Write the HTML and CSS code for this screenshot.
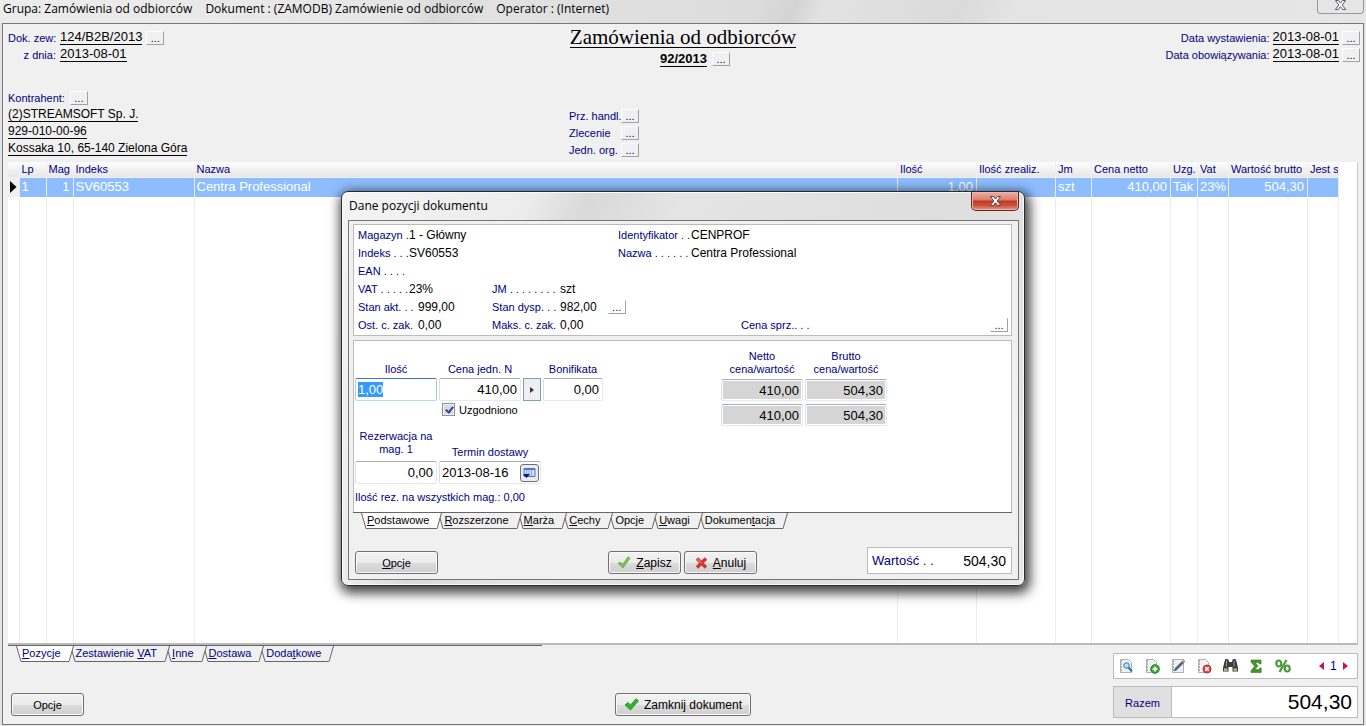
FILE: index.html
```html
<!DOCTYPE html>
<html lang="pl">
<head>
<meta charset="utf-8">
<title>Zamówienia od odbiorców</title>
<link rel="stylesheet" href="styles.css">
</head>
<body>
<header class="titlebar">
  <span>Grupa: Zamówienia od odbiorców</span>
  <span>Dokument : (ZAMODB) Zamówienie od odbiorców</span>
  <span>Operator : (Internet)</span>
  <button class="win-close" aria-label="Zamknij okno"><svg width="13" height="11" viewBox="0 0 13 11"><path d="M1.5 .5h3l2 2.6 2-2.6h3L8.200 5l3.500 4.500h-3l-2.200-2.800L4.300 9.500h-3L4.800 5z" fill="#fff" stroke="#555b6b"/></svg></button>
</header>
<main class="panel">
  <section class="doc-head">
    <div class="head-left">
      <div class="line"><span class="lbl w-lbl">Dok. zew:</span><span class="val big">124/B2B/2013</span><button class="dots">...</button></div>
      <div class="line"><span class="lbl w-lbl">z dnia:</span><span class="val big">2013-08-01</span></div>
      <div class="line customer"><span class="lbl">Kontrahent:</span><button class="dots">...</button></div>
      <div class="line"><span class="val">(2)STREAMSOFT Sp. J.</span></div>
      <div class="line"><span class="val">929-010-00-96</span></div>
      <div class="line"><span class="val">Kossaka 10, 65-140 Zielona Góra</span></div>
    </div>
    <div class="head-mid">
      <h1 class="doc-title">Zamówienia od odbiorców</h1>
      <div class="doc-no"><span>92/2013</span><button class="dots">...</button></div>
      <div class="mid-list">
        <div class="line"><span class="lbl">Prz. handl.</span><button class="dots">...</button></div>
        <div class="line"><span class="lbl">Zlecenie</span><button class="dots">...</button></div>
        <div class="line"><span class="lbl">Jedn. org.</span><button class="dots">...</button></div>
      </div>
    </div>
    <div class="head-right">
      <div class="line"><span class="lbl">Data wystawienia:</span><span class="val big">2013-08-01</span><button class="dots">...</button></div>
      <div class="line"><span class="lbl">Data obowiązywania:</span><span class="val big">2013-08-01</span><button class="dots">...</button></div>
    </div>
  </section>

  <div class="grid-box">
    <table class="items">
      <colgroup><col class="c11"><col class="c27"><col class="c27"><col class="c121"><col><col class="c79"><col class="c79"><col class="c36"><col class="c79"><col class="c27"><col class="c31"><col class="c79"><col class="c31"></colgroup>
      <thead><tr><th></th><th>Lp</th><th>Mag</th><th>Indeks</th><th>Nazwa</th><th>Ilość</th><th>Ilość zrealiz.</th><th>Jm</th><th>Cena netto</th><th>Uzg.</th><th>Vat</th><th>Wartość brutto</th><th>Jest s</th></tr></thead>
      <tbody>
        <tr class="selected"><td class="mark"><svg width="7" height="12" viewBox="0 0 7 12"><path d="M0 0l6.500 6L0 12z"/></svg></td><td>1</td><td class="num">1</td><td>SV60553</td><td>Centra Professional</td><td class="num">1,00</td><td></td><td>szt</td><td class="num">410,00</td><td>Tak</td><td>23%</td><td class="num">504,30</td><td></td></tr>
        <tr class="filler"><td></td><td></td><td></td><td></td><td></td><td></td><td></td><td></td><td></td><td></td><td></td><td></td><td></td></tr>
      </tbody>
    </table>
  </div>

  <footer class="doc-foot">
    <nav class="tabs main-tabs">
      <svg class="edge" width="6" height="16"><path class="on" d="M0 0L5 15.500H6V0z"/><path d="M.5 0L5 15.500H6"/></svg>
      <button class="tab active"><u>P</u>ozycje</button>
      <svg class="edge" width="7" height="16"><path class="on" d="M0 0V15.500L4 0z"/><path d="M0 15.500L4.500 0M3 5L6 15.500H7"/></svg>
      <button class="tab">Zestawienie <u>V</u>AT</button>
      <svg class="edge" width="7" height="16"><path d="M0 15.500L4.500 0M3 5L6 15.500H7"/></svg>
      <button class="tab"><u>I</u>nne</button>
      <svg class="edge" width="7" height="16"><path d="M0 15.500L4.500 0M3 5L6 15.500H7"/></svg>
      <button class="tab"><u>D</u>ostawa</button>
      <svg class="edge" width="7" height="16"><path d="M0 15.500L4.500 0M3 5L6 15.500H7"/></svg>
      <button class="tab">Doda<u>t</u>kowe</button>
      <svg class="edge" width="7" height="16"><path d="M0 15.500L4.500 0"/></svg>
    </nav>
    <button class="btn b-options">Opcje</button>
    <button class="btn b-close"><svg width="15" height="13" viewBox="0 0 15 13"><path d="M1 7l3-2.500 2.500 2.500L12 .8l2.500 2L6.500 12z" fill="#2fb52a" stroke="#1d8f1a" stroke-width=".8"/></svg><span>Zamknij dokument</span></button>
    <div class="foot-right">
      <div class="toolbar">
        <button class="tool" aria-label="Podgląd"><svg width="15" height="16" viewBox="0 0 15 16"><path d="M1.500 1.500h8l3 3v10h-11z" fill="#f1f1f1" stroke="#b0b0b0"/><path d="M2 3h1M2 6h1M2 9h1M2 12h1" stroke="#666"/><circle cx="7.500" cy="7.500" r="2.700" fill="#b9e2f8" stroke="#4e9bd0" stroke-width="1.300"/><path d="M9.500 9.500l3.500 4" stroke="#2f6fb0" stroke-width="2"/></svg></button>
        <button class="tool" aria-label="Dodaj"><svg width="15" height="16" viewBox="0 0 15 16"><path d="M1.500 1.500h7l3 3v10h-10z" fill="#f1f1f1" stroke="#b0b0b0"/><path d="M2 3h1M2 6h1M2 9h1M2 12h1" stroke="#666"/><circle cx="10" cy="11" r="4.300" fill="#3fa63c" stroke="#25802a"/><path d="M10 8.500v5M7.500 11h5" stroke="#fff" stroke-width="1.600"/></svg></button>
        <button class="tool" aria-label="Edytuj"><svg width="15" height="16" viewBox="0 0 15 16"><path d="M1.500 1.500h11v13h-11z" fill="#f1f1f1" stroke="#b0b0b0"/><path d="M2 3h1M2 6h1M2 9h1M2 12h1" stroke="#666"/><path d="M4 12l8-8" stroke="#41688f" stroke-width="2.500"/><path d="M11.500 4.500l2-2" stroke="#c98a4a" stroke-width="2.500"/><path d="M3 13.200l1.800-.8-1-1z" fill="#333"/></svg></button>
        <button class="tool" aria-label="Usuń"><svg width="15" height="16" viewBox="0 0 15 16"><path d="M1.500 1.500h7l3 3v10h-10z" fill="#f1f1f1" stroke="#b0b0b0"/><path d="M2 3h1M2 6h1M2 9h1M2 12h1" stroke="#666"/><circle cx="10" cy="11" r="4" fill="#e04a45" stroke="#b92c2c"/><path d="M8.300 9.300l3.400 3.400M11.700 9.300l-3.400 3.400" stroke="#fff" stroke-width="1.500"/></svg></button>
        <button class="tool" aria-label="Szukaj"><svg width="15" height="16" viewBox="0 0 15 16"><path d="M1.500 3.500L2.500 1h2.300l1.200 2v1h3V3l1.200-2h2.300l1 2.500L15 10v3.500H9.500V9h-4v4.500H0V10z" fill="#3d3d3d"/><path d="M3.500 2.500v6M11 2.500v6" stroke="#999"/><path d="M1 10.500h3.500v2.200H1zM10.500 10.500H14v2.200h-3.500z" fill="#d2bd83"/></svg></button>
        <button class="tool" aria-label="Suma"><svg width="15" height="16" viewBox="0 0 15 16"><path d="M2 2h10v4h-1.500L9.500 4.500H6.200L9 8l-3.300 3.600h4L11 10h1.200v4.500H2v-1.800L5.600 8.300 2 4z" fill="#45952b" stroke="#2f7720" stroke-width=".6"/></svg></button>
        <button class="tool" aria-label="Procent"><svg width="16" height="16" viewBox="0 0 16 16"><g fill="none" stroke="#4a9a35" stroke-width="2.200"><ellipse cx="3.800" cy="5.500" rx="2.500" ry="3"/><ellipse cx="12.200" cy="10.500" rx="2.500" ry="3"/><path d="M11.500 2L4.500 14"/></g></svg></button>
        <div class="pager"><button aria-label="Poprzednia"><svg width="5" height="8" viewBox="0 0 5 8"><path d="M5 0v8L0 4z" fill="#cc0f57"/></svg></button><span>1</span><button aria-label="Następna"><svg width="5" height="8" viewBox="0 0 5 8"><path d="M0 0v8l5-4z" fill="#cc0f57"/></svg></button></div>
      </div>
      <div class="total"><span class="total-lbl">Razem</span><span class="total-val">504,30</span></div>
    </div>
  </footer>
</main>

<div class="overlay">
  <section class="dialog" role="dialog" aria-labelledby="dlg-title">
    <header class="dlg-bar"><h2 id="dlg-title">Dane pozycji dokumentu</h2>
      <button class="dlg-close" aria-label="Zamknij"><svg width="13" height="11" viewBox="0 0 13 11"><path d="M1.500 .5h3l2 2.600 2-2.600h3L8.200 5l3.500 4.500h-3l-2.200-2.800L4.300 9.500h-3L4.800 5z" fill="#fff" stroke="#5b4650"/></svg></button></header>
    <div class="dlg-body">
      <div class="info">
        <div class="cell a r1"><span class="lbl">Magazyn .</span><span>1 - Główny</span></div>
        <div class="cell c r1"><span class="lbl">Identyfikator . .</span><span>CENPROF</span></div>
        <div class="cell a r2"><span class="lbl">Indeks . . .</span><span>SV60553</span></div>
        <div class="cell c r2"><span class="lbl">Nazwa . . . . . .</span><span>Centra Professional</span></div>
        <div class="cell a r3"><span class="lbl">EAN . . . .</span></div>
        <div class="cell a r4"><span class="lbl">VAT . . . . .</span><span>23%</span></div>
        <div class="cell b r4"><span class="lbl">JM . . . . . . . .</span><span>szt</span></div>
        <div class="cell a wide r5"><span class="lbl">Stan akt. . .</span><span>999,00</span></div>
        <div class="cell b r5"><span class="lbl">Stan dysp. . .</span><span>982,00</span><button class="dots">...</button></div>
        <div class="cell a wide r6"><span class="lbl">Ost. c. zak.</span><span>0,00</span></div>
        <div class="cell b r6"><span class="lbl">Maks. c. zak.</span><span>0,00</span></div>
        <div class="cell d r6"><span class="lbl">Cena sprz.. . .</span><button class="dots">...</button></div>
      </div>
      <div class="edit">
        <form class="fields">
          <label class="f-lbl" for="ilosc">Ilość</label>
          <label class="f-lbl" for="cena">Cena jedn. N</label>
          <label class="f-lbl l-bon" for="bon">Bonifikata</label>
          <input class="inp focus" id="ilosc" value="1,00">
          <input class="inp num" id="cena" value="410,00">
          <button type="button" class="price-btn" aria-label="Wybierz cenę"><svg width="4" height="6" viewBox="0 0 4 6"><path d="M0 0v6l4-3z" fill="#333"/></svg></button>
          <input class="inp num" id="bon" value="0,00">
          <label class="check"><input type="checkbox" checked><span>Uzgodniono</span></label>
          <label class="f-lbl l-rez" for="rez">Rezerwacja na<br>mag. 1</label>
          <label class="f-lbl l-term" for="term">Termin dostawy</label>
          <input class="inp num rez" id="rez" value="0,00">
          <div class="inp date"><input id="term" value="2013-08-16"><button type="button" aria-label="Kalendarz"><svg width="13" height="12" viewBox="0 0 13 12"><path d="M1 1.500h11v8H1z" fill="#cfe0fa" stroke="#4c7ac8"/><path d="M1 2h11" stroke="#4c7ac8" stroke-width="2"/><path d="M3.500 3v6M6 3v6M8.500 3v6" stroke="#87a9de"/><path d="M0 7h7l-3.500 4z" fill="#10108c"/></svg></button></div>
          <p class="note">Ilość rez. na wszystkich mag.: 0,00</p>
        </form>
        <div class="sums">
          <span class="f-lbl">Netto<br>cena/wartość</span><span class="f-lbl">Brutto<br>cena/wartość</span>
          <input class="inp num ro" aria-label="Cena netto" readonly value="410,00"><input class="inp num ro" aria-label="Cena brutto" readonly value="504,30">
          <input class="inp num ro" aria-label="Wartość netto" readonly value="410,00"><input class="inp num ro" aria-label="Wartość brutto" readonly value="504,30">
        </div>
      </div>
      <nav class="tabs dlg-tabs">
        <svg class="edge" width="6" height="16"><path class="on" d="M0 0L5 15.500H6V0z"/><path d="M.5 0L5 15.500H6"/></svg>
        <button class="tab active"><u>P</u>odstawowe</button>
        <svg class="edge" width="7" height="16"><path class="on" d="M0 0V15.500L4 0z"/><path d="M0 15.500L4.500 0M3 5L6 15.500H7"/></svg>
        <button class="tab"><u>R</u>ozszerzone</button>
        <svg class="edge" width="7" height="16"><path d="M0 15.500L4.500 0M3 5L6 15.500H7"/></svg>
        <button class="tab"><u>M</u>arża</button>
        <svg class="edge" width="7" height="16"><path d="M0 15.500L4.500 0M3 5L6 15.500H7"/></svg>
        <button class="tab"><u>C</u>echy</button>
        <svg class="edge" width="7" height="16"><path d="M0 15.500L4.500 0M3 5L6 15.500H7"/></svg>
        <button class="tab">Opcje</button>
        <svg class="edge" width="7" height="16"><path d="M0 15.500L4.500 0M3 5L6 15.500H7"/></svg>
        <button class="tab"><u>U</u>wagi</button>
        <svg class="edge" width="7" height="16"><path d="M0 15.500L4.500 0M3 5L6 15.500H7"/></svg>
        <button class="tab">Dokumen<u>t</u>acja</button>
        <svg class="edge" width="7" height="16"><path d="M0 15.500L4.500 0"/></svg>
      </nav>
      <div class="dlg-foot">
        <button class="btn b-opt"><span><u>O</u>pcje</span></button>
        <div class="actions">
          <button class="btn"><svg width="14" height="13" viewBox="0 0 14 13"><path d="M1 7.500l2.500-1.500 2 2.500L11 .8l2 1.500L6 12z" fill="#7cc254" stroke="#5aa53c" stroke-width=".7"/></svg><span><u>Z</u>apisz</span></button>
          <button class="btn"><svg width="13" height="12" viewBox="0 0 13 12"><path d="M2 1.500l9 9M11 1.500l-9 9" stroke="#d8302f" stroke-width="3.400"/><path d="M2.500 2l4 4" stroke="#f07a72" stroke-width="1.500"/></svg><span><u>A</u>nuluj</span></button>
        </div>
        <div class="worth"><span>Wartość . .</span><b>504,30</b></div>
      </div>
    </div>
  </section>
</div>
<script src="app.js"></script>
</body>
</html>
```
FILE: app.js
```js
const quantity = document.getElementById('ilosc');
quantity.focus();
quantity.select();
```
FILE: styles.css
```css
* { box-sizing: border-box; }
html, body { height: 100%; }
body {
  margin: 0;
  display: flex;
  flex-direction: column;
  position: relative;
  overflow: hidden;
  background: #e3e3e3;
  color: #000;
  font: 12px/16px "Liberation Sans", Arial, sans-serif;
}
button, input { font: inherit; color: inherit; margin: 0; }
button { padding: 0; border: 0; background: none; white-space: nowrap; }
svg { display: block; flex: none; }

.titlebar {
  position: relative;
  display: flex;
  gap: 13px;
  height: 23px;
  padding: 1px 3px;
  font: 12px/16px "Open Sans", sans-serif;
  background: linear-gradient(115deg, #ececec 0, #e6e6e6 30%, #d9d9d9 32%, #e2e2e2 36%, #dcdcdc 55%, #d4d4d4 58%, #e2e2e2 60%, #dadada 70%, #e4e4e4 74%, #e6e6e6 100%);
}
.win-close {
  position: absolute;
  right: 2px;
  top: 0;
  width: 47px;
  height: 14px;
  display: flex;
  justify-content: center;
  border: 1px solid #999;
  border-top: 0;
  border-radius: 0 0 4px 4px;
  background: #e6e6e6;
}
.panel {
  flex: 1;
  display: flex;
  flex-direction: column;
  min-height: 0;
  margin: 0 2px 1px;
  padding: 0 5px;
  border: 1px solid #777;
  background: #f0f0f0;
}
.doc-head { display: grid; grid-template-columns: 1fr 228px 1fr; height: 138px; }
.line { display: flex; align-items: center; height: 17px; }
.lbl { color: #000080; font-size: 11px; white-space: nowrap; }
.val { line-height: 14px; border-bottom: 1px solid #000; white-space: nowrap; }
.val.big { font-size: 13px; }
.dots {
  width: 18px;
  height: 14px;
  margin-left: 3px;
  border: 1px solid;
  border-color: #fff #a0a0a0 #a0a0a0 #fff;
  color: #000080;
  font-size: 11px;
  line-height: 12px;
}
.head-left { padding-top: 5px; }
.head-left .dots { margin-left: 4px; }
.w-lbl { width: 48px; margin-right: 4px; text-align: right; }
.customer { margin-top: 26px; }
.head-left .customer .dots { margin-left: 5px; }
.head-mid { padding-top: 4px; }
.doc-title {
  display: flex;
  justify-content: center;
  width: max-content;
  margin: 0 auto;
  font: 21px/19px "Liberation Serif", "Times New Roman", serif;
  border-bottom: 1px solid #000;
}
.doc-no { display: flex; justify-content: center; align-items: center; height: 18px; margin-top: 2px; padding-left: 24px; font-size: 13px; font-weight: bold; }
.doc-no span { line-height: 14px; border-bottom: 1px solid #000; }
.doc-no .dots { margin-left: 5px; font-weight: normal; }
.mid-list { margin-top: 39px; }
.mid-list .lbl { width: 52px; }
.mid-list .dots { margin-left: 0; }
.head-right { padding-top: 5px; margin-right: -2px; }
.head-right .line { justify-content: flex-end; }
.head-right .val { margin-left: 3px; }

.grid-box { flex: 1; min-height: 0; padding-right: 18px; background: #fff; border-right: 1px solid #c8c8c8; border-bottom: 2px solid #bbb; }
.items { width: 100%; height: 100%; table-layout: fixed; border-collapse: collapse; }
.c11 { width: 11px; } .c27 { width: 27px; } .c31 { width: 31px; } .c36 { width: 36px; } .c79 { width: 79px; } .c121 { width: 121px; }
.items th {
  height: 15px;
  padding: 0 0 0 2px;
  text-align: left;
  font-size: 11px;
  font-weight: normal;
  line-height: 15px;
  color: #000080;
  white-space: nowrap;
  overflow: hidden;
  border-right: 1px solid #f0f0f0;
  background: linear-gradient(#fdfdfd, #e6e6e6);
}
.items td { padding: 0 2px; white-space: nowrap; overflow: hidden; border-right: 1px solid #ececec; }
.selected td { height: 19px; line-height: 18px; color: #fff; background: #8dbdff; font-size: 13px; border-top: 1px solid #f0f0f0; }
.selected td.mark { background: #f0f0f0; }
.items td.num { text-align: right; padding-right: 3px; }
.filler td { padding: 0; }

.doc-foot { display: grid; grid-template-columns: 1fr 136px 1fr; grid-template-rows: auto 1fr; height: 79px; }
.tabs { display: flex; align-items: flex-start; border-top: 1px solid #666; padding-left: 8px; }
.main-tabs { grid-column: 1; width: 88%; color: #000080; }
.edge { fill: none; stroke: #666; }
.edge .on { fill: #fff; stroke: none; }
.tab { height: 16px; padding: 0 8px 0 0; font-size: 11px; line-height: 15px; border-bottom: 1px solid #666; }
.tab.active { background: #fff; }
.tab u, .btn u { text-underline-offset: 1px; }
.btn {
  display: flex;
  align-items: center;
  justify-content: center;
  height: 23px;
  gap: 5px;
  border: 1px solid #707070;
  border-radius: 3px;
  box-shadow: inset 0 0 0 1px #fafafa;
  background: linear-gradient(#f2f2f2 0, #ebebeb 50%, #dcdcdc 51%, #cfcfcf 100%);
}
.b-options { grid-column: 1; grid-row: 2; align-self: end; width: 73px; margin: 0 0 8px 3px; font-size: 11px; }
.b-close { grid-column: 2; grid-row: 2; align-self: end; margin-bottom: 8px; }
.foot-right { grid-column: 3; grid-row: 1 / 3; justify-self: end; width: 245px; padding-top: 8px; }
.toolbar { display: flex; align-items: center; gap: 11px; height: 26px; padding-left: 5px; border: 1px solid #bbb; background: #fff; }
.pager { display: flex; align-items: center; gap: 6px; margin-left: 17px; color: #000080; }
.total { display: flex; height: 32px; margin-top: 7px; border: 1px solid #bbb; background: #fff; }
.total-lbl { width: 58px; text-align: center; line-height: 33px; font-size: 11px; color: #000080; background: #e0e0e0; border-right: 1px solid #bbb; }
.total-val { flex: 1; text-align: right; padding-right: 5px; font-size: 21px; line-height: 30px; }

.overlay { position: absolute; inset: 0; display: flex; justify-content: center; align-items: flex-start; padding-top: 191px; }
.dialog {
  width: 684px;
  padding: 0 5px 5px 6px;
  border: 1px solid #2b2b2b;
  border-radius: 7px;
  background: linear-gradient(115deg, #f4f4f4 0, #ececec 22%, #d9d9d9 29%, #e4e4e4 40%, #dedede 70%, #e8e8e8 100%);
  box-shadow: inset 0 0 0 1px #fafafa, 2px 4px 12px 3px rgba(0, 0, 0, .75);
}
.dlg-bar { position: relative; height: 28px; }
.dlg-bar h2 { margin: 0; padding: 6px 1px; font: 12px/16px "Open Sans", sans-serif; }
.dlg-close {
  position: absolute;
  top: 0;
  right: 0;
  width: 48px;
  height: 19px;
  display: flex;
  align-items: center;
  justify-content: center;
  border: 1px solid #5e2620;
  border-top: 0;
  border-radius: 0 0 5px 5px;
  box-shadow: inset 0 0 0 1px #efb7ab;
  background: linear-gradient(#eeb0a4 0, #db7c6b 45%, #c2341c 50%, #c9543c 75%, #e59a80 100%);
}
.dlg-body { padding: 3px 6px 4px 4px; border: 1px solid #777; background: #f0f0f0; }
.info {
  display: grid;
  grid-template-columns: 134px 126px 123px 1fr;
  grid-template-rows: repeat(6, 18px);
  padding: 1px 3px 1px 4px;
  border: 1px solid #bbb;
  background: #fff;
}
.cell { display: flex; align-items: center; white-space: nowrap; }
.a { grid-column: 1; } .b { grid-column: 2 / 4; } .c { grid-column: 3 / 5; } .d { grid-column: 4; }
.r1 { grid-row: 1; } .r2 { grid-row: 2; } .r3 { grid-row: 3; } .r4 { grid-row: 4; } .r5 { grid-row: 5; } .r6 { grid-row: 6; }
.a .lbl { width: 51px; }
.a.wide .lbl { width: 60px; }
.b .lbl { width: 68px; }
.c .lbl { width: 73px; }
.b .dots { margin-left: 11px; }
.d .dots { margin-left: auto; }
.edit { display: flex; align-items: flex-start; height: 172px; margin-top: 4px; padding-left: 1px; border: 1px solid #bbb; border-bottom: 0; background: #fff; }
.fields { display: grid; grid-template-columns: 82px 82px 18px 60px; grid-template-rows: 36px 23px 17px 43px 23px 21px; gap: 0 2px; padding-top: 1px; }
.f-lbl { align-self: end; padding-bottom: 2px; text-align: center; color: #000080; font-size: 11px; line-height: 13px; white-space: nowrap; }
.l-bon { grid-column: 4; }
.l-rez { grid-column: 1; grid-row: 4; padding-bottom: 5px; }
.l-term { grid-column: 2 / 4; grid-row: 4; }
.rez { grid-column: 1; grid-row: 5; }
.inp { width: 100%; min-width: 0; height: 23px; padding: 0 3px; font-size: 13px; border: 1px solid; border-color: #abadb3 #e3e9ef #e3e9ef #dbdfe6; border-radius: 2px; background: #fff; outline: 0; }
.inp.num { text-align: right; }
.inp.focus { padding: 0 2px; border-color: #3d7bad #a4c9e3 #b7d9ed #b5cfe7; }
.inp.focus::selection { background: rgba(51, 153, 255, .99); color: #fff; }
.inp.ro { height: 22px; background: #d5d5d5; box-shadow: inset 0 0 0 1px #fff; }
.price-btn { display: flex; align-items: center; justify-content: center; border: 1px solid #7f9db9; background: #efefef; }
.check { grid-column: 2 / 5; display: flex; align-items: center; gap: 4px; padding-left: 3px; font-size: 11px; }
.check input {
  appearance: none;
  width: 13px;
  height: 13px;
  border: 1px solid #8e8f8f;
  box-shadow: inset 0 0 0 1px #f4f4f4;
  background: #d5dbe4;
  position: relative;
}
.check input:checked::after { content: ""; position: absolute; left: 4px; top: 1px; width: 3px; height: 6px; border: solid #2e4a8e; border-width: 0 2px 2px 0; transform: rotate(38deg); }
.date { grid-column: 2 / 4; grid-row: 5; display: flex; align-items: center; padding: 0 1px 0 2px; }
.date input { flex: 1; min-width: 0; width: 20px; padding: 0; border: 0; background: none; outline: 0; }
.date button { display: flex; align-items: center; justify-content: center; width: 19px; height: 18px; border: 1px solid #707070; border-radius: 3px; background: #ececec; }
.note { grid-column: 1 / 5; grid-row: 6; align-self: end; margin: 0; color: #000080; font-size: 11px; line-height: 15px; white-space: nowrap; }
.sums { display: grid; grid-template-columns: 82px 82px; grid-template-rows: 35px 22px 22px; gap: 3px 2px; margin-left: 118px; }
.sums .f-lbl { padding-bottom: 0; }
.dlg-tabs { border-top: 1px solid #666; }
.dlg-foot { display: grid; grid-template-columns: 1fr auto 1fr; align-items: end; margin-top: 18px; }
.b-opt { width: 83px; margin-left: 2px; font-size: 11px; }
.dlg-foot > * { margin-bottom: 1px; }
.actions { display: flex; gap: 3px; }
.actions .btn { width: 73px; }
.worth { justify-self: end; display: flex; align-items: center; justify-content: space-between; width: 145px; height: 27px; padding: 0 5px 0 4px; border: 1px solid #bbb; background: #fff; color: #000080; font-size: 13px; }
.worth b { color: #000; font-size: 14px; font-weight: normal; }
```
